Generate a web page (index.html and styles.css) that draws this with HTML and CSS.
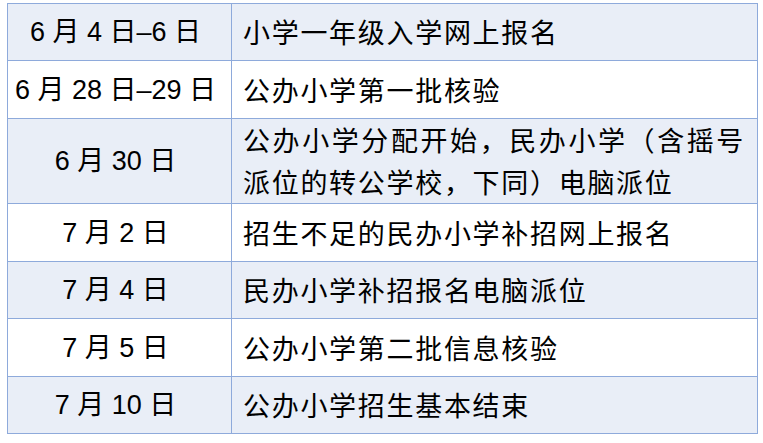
FILE: index.html
```html
<!DOCTYPE html>
<html lang="zh-CN">
<head>
<meta charset="utf-8">
<title>小学一年级入学时间安排</title>
<link rel="stylesheet" href="styles.css">
</head>
<body>
<table class="schedule">
  <colgroup><col class="c-date"><col class="c-event"></colgroup>
  <tbody>
    <tr class="row alt first"><td class="date">6 月 4 日–6 日</td><td class="event">小学一年级入学网上报名</td></tr>
    <tr class="row"><td class="date">6 月 28 日–29 日</td><td class="event">公办小学第一批核验</td></tr>
    <tr class="row alt tall"><td class="date">6 月 30 日</td><td class="event">公办小学分配开始，民办小学（含摇号派位的转公学校，下同）电脑派位</td></tr>
    <tr class="row"><td class="date">7 月 2 日</td><td class="event">招生不足的民办小学补招网上报名</td></tr>
    <tr class="row alt short"><td class="date">7 月 4 日</td><td class="event">民办小学补招报名电脑派位</td></tr>
    <tr class="row"><td class="date">7 月 5 日</td><td class="event">公办小学第二批信息核验</td></tr>
    <tr class="row alt short"><td class="date">7 月 10 日</td><td class="event">公办小学招生基本结束</td></tr>
  </tbody>
</table>
</body>
</html>
```
FILE: styles.css
```css
html, body {
  margin: 0;
  padding: 0;
  background: #ffffff;
}

body {
  padding: 3px 0 0 7px;
  color: #000000;
  font-family: "Noto Sans CJK SC", sans-serif;
}

.schedule {
  border-collapse: collapse;
  table-layout: fixed;
  width: 750px;
}

.c-date { width: 224px; }
.c-event { width: 526px; }

.schedule td {
  border: 1px solid #8eaadb;
  vertical-align: middle;
  line-height: 42px;
  padding-top: 0;
  padding-bottom: 0;
}

.row { height: 58px; }
.row.first { height: 57px; }
.row.short { height: 57px; }
.row.tall { height: 85px; }

.row.alt td { background: #e9eef7; }

.date {
  font-family: "Liberation Sans", "Noto Sans CJK SC", sans-serif;
  font-size: 27px;
  text-align: center;
  padding: 0 12px 0 4px;
  white-space: nowrap;
}

.event {
  font-family: "Noto Sans CJK SC", sans-serif;
  font-size: 27px;
  letter-spacing: 1.7px;
  text-align: justify;
  padding: 0 12px 0 11px;
}
```
